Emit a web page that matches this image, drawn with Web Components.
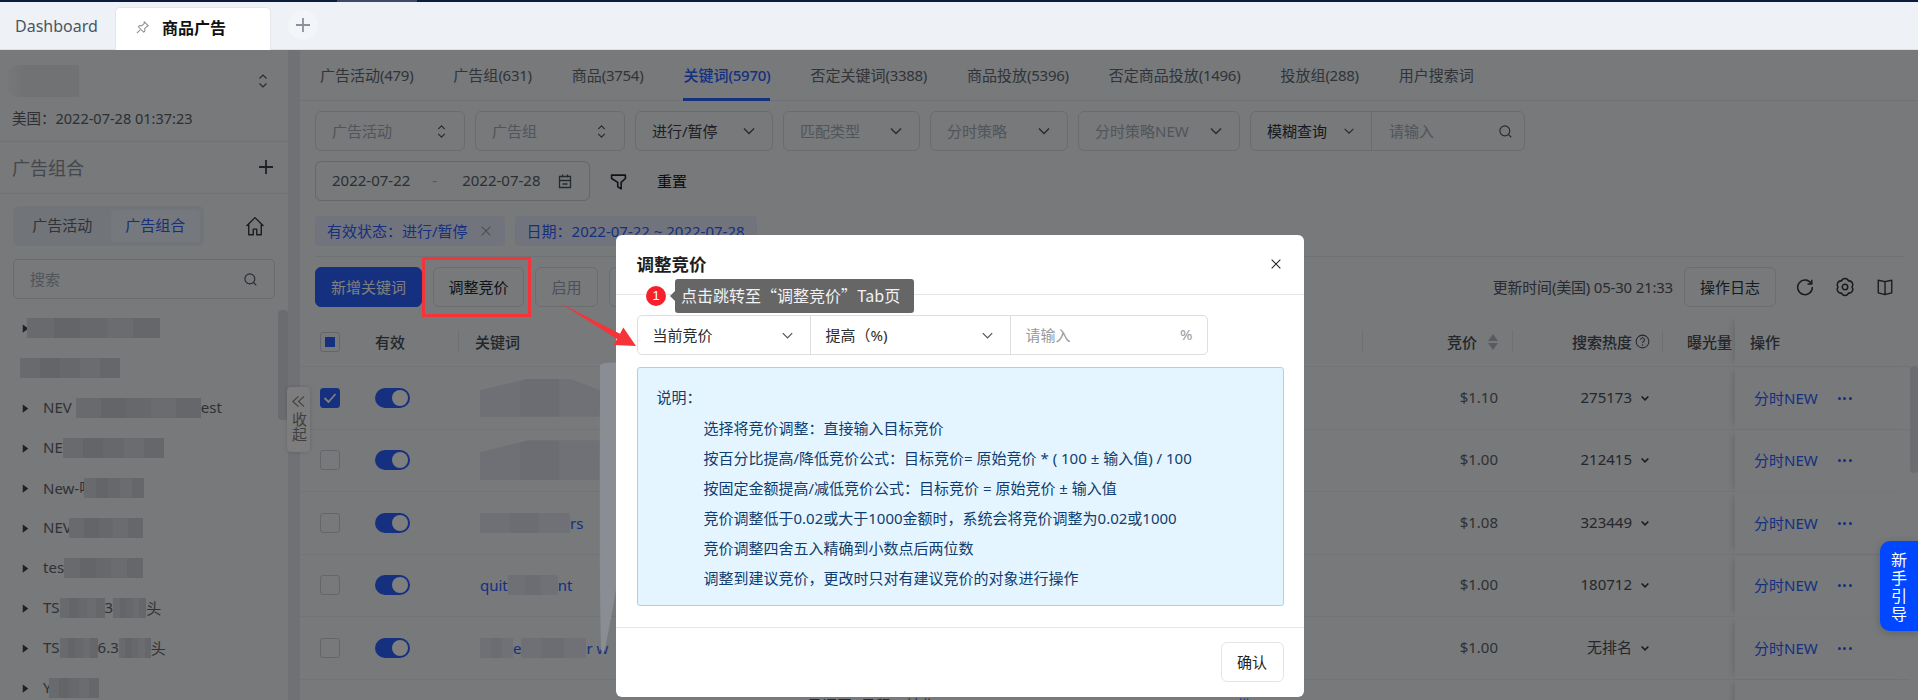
<!DOCTYPE html>
<html lang="zh-CN"><head><meta charset="utf-8"><title>商品广告</title>
<style>
html,body{margin:0;padding:0;height:700px;overflow:hidden;background:#eef2f6}
body{font:15px "Noto Sans","Noto Sans CJK SC",sans-serif;color:#60666f}
</style></head><body>
<x-app></x-app>
<script>
const ICONS={
 chev:'<path d="M3 5.5l5 5 5-5" fill="none" stroke="currentColor" stroke-width="1.3"/>',
 updown:'<path d="M4.5 5.5L8 2l3.5 3.5M4.5 10.5L8 14l3.5-3.5" fill="none" stroke="currentColor" stroke-width="1.2"/>',
 plus:'<path d="M8 1v14M1 8h14" fill="none" stroke="currentColor" stroke-width="1.8"/>',
 search:'<circle cx="7.3" cy="7.3" r="5.3" fill="none" stroke="currentColor" stroke-width="1.2"/><path d="M11.2 11.2l3 3" stroke="currentColor" stroke-width="1.2"/>',
 cal:'<path d="M2.5 3.5h11v11h-11zM2.5 7.5h11M5.5 1.5v3M10.5 1.5v3M5.5 11h5" fill="none" stroke="currentColor" stroke-width="1.3"/>',
 filter:'<path d="M1.500 2h13v3.200l-4 3.600V15L7.300 13V8.800L1.500 5.200z" fill="none" stroke="currentColor" stroke-width="1.500" stroke-linejoin="round"/>',
 home:'<path d="M1.200 8L8 1.300 14.800 8M3 6.800V15h3.600v-4.500h2.800V15H13V6.800" fill="none" stroke="currentColor" stroke-width="1.100" stroke-linejoin="round"/>',
 x:'<path d="M3 3l10 10M13 3L3 13" fill="none" stroke="currentColor" stroke-width="1.200"/>',
 pin:'<path d="M9.700 1.800l4.500 4.500-1.300.3-2.600 2.600.2 2.600-1.200 1.200-5.800-5.800 1.200-1.200 2.600.2 2.600-2.600zM5.500 10.500L2 14" fill="none" stroke="currentColor" stroke-width="1.100" stroke-linejoin="round"/>',
 refresh:'<path d="M13.600 5A6.500 6.500 0 1 0 14.500 8" fill="none" stroke="currentColor" stroke-width="1.300"/><path d="M14 1.500V5.300H10.300" fill="none" stroke="currentColor" stroke-width="1.300"/>',
 gear:'<path d="M13.600 8A3 3 0 0 1 10.800 12.850A3 3 0 0 1 5.200 12.850A3 3 0 0 1 2.400 8A3 3 0 0 1 5.200 3.150A3 3 0 0 1 10.800 3.150A3 3 0 0 1 13.600 8z" fill="none" stroke="currentColor" stroke-width="1.200" stroke-linejoin="round"/><circle cx="8" cy="8" r="2.200" fill="none" stroke="currentColor" stroke-width="1.200"/>',
 book:'<path d="M8 3.300L2 2v11.200l6 1.500 6-1.500V2zM8 3.300v11.400" fill="none" stroke="currentColor" stroke-width="1.200" stroke-linejoin="round"/>',
 help:'<circle cx="8" cy="8" r="6.800" fill="none" stroke="currentColor" stroke-width="1.100"/><path d="M5.900 6.200a2.100 2.100 0 1 1 3.200 1.800c-.7.4-1.100.8-1.100 1.700" fill="none" stroke="currentColor" stroke-width="1.100"/><circle cx="8" cy="11.700" r=".8" fill="currentColor"/>',
 caret:'<path d="M3.500 6l4.500 4.500L12.500 6" fill="none" stroke="currentColor" stroke-width="2"/>',
 tri:'<path d="M4 2l8 6-8 6z" fill="currentColor"/>',
 dbl:'<path d="M8 2.500L2 8l6 5.500M14 2.500L8 8l6 5.500" fill="none" stroke="currentColor" stroke-width="1.200"/>',
 check:'<path d="M2.500 8l4 4 7-8" fill="none" stroke="currentColor" stroke-width="1.800"/>'
};
function def(name,css,html){
 customElements.define(name,class extends HTMLElement{
  connectedCallback(){
   if(this.shadowRoot)return;
   const r=this.attachShadow({mode:'open'});
   const h=typeof html==='function'?html(this):html;
   r.innerHTML='<style>'+css+'</style>'+h;
  }
 });
}
const CJK='"Noto Sans CJK SC","Noto Sans",sans-serif';
def('x-i',':host{display:inline-flex;flex:none;line-height:0}svg{display:block}',
 e=>{const s=e.getAttribute('s')||16;return `<svg width="${s}" height="${s}" viewBox="0 0 16 16">${ICONS[e.getAttribute('n')]}</svg>`});

/* redaction mosaic (drawn under the dimming mask, so its colours are the undimmed ones) */
def('x-blur',':host{display:inline-block;flex:none;height:20px;background:linear-gradient(90deg,#d2d5db 0 20%,#c8cbd1 20% 40%,#ced1d8 40% 60%,#d4d8e1 60% 80%,#cccfd6 80%);vertical-align:middle}','');

def('x-toptabs',`
:host{display:block;height:50px;box-sizing:border-box;border-top:2px solid #0b1b3b;background:#eef1f5;border-bottom:1px solid #dcdfe4;position:relative}
.wrap{display:flex;align-items:flex-end;height:47px}
.dash{width:115px;box-sizing:border-box;padding-left:15px;height:42px;line-height:38px;font-size:16px;color:#4a5563}
.tab{width:156px;height:43px;box-sizing:border-box;background:#fff;border:1px solid #e3e6ea;border-bottom:0;border-radius:5px 5px 0 0;display:flex;align-items:center;padding:0 0 4px 19px;color:#111;font:600 16px ${CJK};gap:12px;margin-bottom:-1px}
.tab x-i{color:#8a8f96}
.plus{margin-left:17px;width:24px;height:24px;border-radius:50%;background:#f3f5f8;display:flex;align-items:center;justify-content:center;color:#8b929b;align-self:center;margin-top:-1px;padding:3px}
.hl{position:absolute;left:337px;width:80px;top:-2px;height:2px;background:#3d4a66}`,
`<div class="hl"></div><div class="wrap"><div class="dash">Dashboard</div><div class="tab"><x-i n="pin" s="15"></x-i>商品广告</div><div class="plus"><x-i n="plus" s="16"></x-i></div></div>`);

def('x-tree',`:host{display:flex;align-items:center;height:40px;padding-left:20px;color:#5f646c;font-size:15px;white-space:nowrap}
x-i{color:#3d4048;margin-right:12px}.t{display:flex;align-items:center;height:20px;padding-bottom:2px}
::slotted(x-blur){margin-top:2px}`,`<x-i n="tri" s="11"></x-i><span class="t"><slot></slot></span>`);

def('x-sidebar',`
:host{display:block;width:288px;flex:none;position:relative;height:650px;overflow:hidden;box-sizing:border-box}
.head{height:92px;box-sizing:border-box;border-bottom:1px solid #e2e5ea;padding:15px 12px 0}
.acct{display:flex;justify-content:space-between;align-items:center;height:32px;padding-right:5px}
.acct x-i{color:#555a62}
.time{margin-top:10px;line-height:22px;font-size:14.500px;color:#5a5f67;white-space:nowrap}
.sec{height:52px;box-sizing:border-box;border-bottom:1px solid #e2e5ea;display:flex;align-items:center;justify-content:space-between;padding:0 14px 2px 12px;font-size:18px;color:#8a8f98}
.sec x-i{color:#39414f}
.segrow{display:flex;align-items:center;margin:12px 0 0 13px;height:40px}
.seg{width:191px;height:40px;box-sizing:border-box;padding:4px;background:#e3e8f1;border-radius:6px;display:flex;align-items:center}
.seg span{width:91px;text-align:center;color:#60666f;line-height:30px;height:32px}
.seg .on{background:#eaf0fb;border-radius:4px;color:#2a60ff;margin-left:3px;width:90px}
.segrow x-i{margin-left:41px;color:#30343c}
.search{margin:13px 0 0 13px;width:262px;height:40px;box-sizing:border-box;border:1px solid #d0d5dd;border-radius:5px;display:flex;align-items:center;justify-content:space-between;padding:0 16px;color:#a5abb5}
.search span{padding-bottom:2px}
.search x-i{color:#505660}
.tree{margin-top:9px}
.thumb{position:absolute;left:278px;top:260px;width:10px;height:110px;background:#d4d8df;border-radius:4px}`,
`<div class="head"><div class="acct"><x-blur style="width:72px;height:32px;background:linear-gradient(90deg,#eef0f4,#e2e4e8 25%,#e2e4e8);margin-left:-5px;border-radius:12px 0 0 12px"></x-blur><x-i n="updown" s="16"></x-i></div><div class="time">美国：2022-07-28 01:37:23</div></div>
<div class="sec">广告组合<x-i n="plus" s="16"></x-i></div>
<div class="segrow"><div class="seg"><span>广告活动</span><span class="on">广告组合</span></div><x-i n="home" s="20"></x-i></div>
<div class="search"><span>搜索</span><x-i n="search" s="15"></x-i></div>
<div class="tree">
<x-tree><x-blur style="width:133px;margin-left:-16px"></x-blur></x-tree>
<x-tree><x-blur style="width:100px;margin-left:-23px"></x-blur></x-tree>
<x-tree>NEV<x-blur style="width:125px;margin-left:4px"></x-blur>est</x-tree>
<x-tree>NE<x-blur style="width:101px"></x-blur></x-tree>
<x-tree>New-咪<x-blur style="width:60px;margin-left:-10px"></x-blur></x-tree>
<x-tree>NEV<x-blur style="width:74px;margin-left:-3px"></x-blur></x-tree>
<x-tree>tes<x-blur style="width:79px"></x-blur></x-tree>
<x-tree>TS<x-blur style="width:45px"></x-blur>3<x-blur style="width:33px"></x-blur>头</x-tree>
<x-tree>TS<x-blur style="width:38px"></x-blur>6.3<x-blur style="width:32px"></x-blur>头</x-tree>
<x-tree>Y<x-blur style="width:50px;margin-left:-3px"></x-blur></x-tree>
</div><div class="thumb"></div>`);

def('x-mtabs',`:host{display:flex;gap:40px;height:51px;box-sizing:border-box;border-bottom:1px solid #dfe3e9;padding-left:20px;white-space:nowrap}
span{line-height:51px;height:50px;color:#636973;font-size:15px;box-sizing:border-box}
span i{font-style:normal;letter-spacing:-.28px}
.on{color:#2a60ff;font-weight:500;border-bottom:3px solid #2a60ff;height:51px}`,
`<span>广告活动<i>(479)</i></span><span>广告组<i>(631)</i></span><span>商品<i>(3754)</i></span><span class="on">关键词<i>(5970)</i></span><span>否定关键词<i>(3388)</i></span><span>商品投放<i>(5396)</i></span><span>否定商品投放<i>(1496)</i></span><span>投放组<i>(288)</i></span><span>用户搜索词</span>`);

def('x-sel',`:host{display:flex;align-items:center;justify-content:space-between;box-sizing:border-box;height:40px;flex:none;border:1px solid #d3d8e0;border-radius:6px;padding:0 15px 0 16px;color:#a4aab4;white-space:nowrap}
:host([dark]){color:#3a3f48}x-i{color:#4d525b}.t{padding-bottom:2px}`,
e=>`<span class="t"><slot></slot></span><x-i n="${e.getAttribute('i')||'chev'}" s="${e.getAttribute('i')?15:16}"></x-i>`);

def('x-filters',`
:host{display:block;padding:10px 0 0 15px}
.r{display:flex;gap:10px;height:40px;margin-bottom:10px;align-items:center}
.fuzzy{display:flex;width:275px;height:40px;box-sizing:border-box;border:1px solid #d3d8e0;border-radius:6px;flex:none}
.fz1{width:121px;box-sizing:border-box;border-right:1px solid #d3d8e0;display:flex;align-items:center;justify-content:space-between;padding:0 15px 0 16px;color:#2d323a}
.fz2{flex:1;display:flex;align-items:center;justify-content:space-between;padding:0 11px 0 17px;color:#a4aab4}
.fz2 x-i,.fz1 x-i{color:#4d525b}
.fz1 span,.fz2 span{padding-bottom:2px}
.date{width:275px;height:40px;box-sizing:border-box;border:1px solid #c9ced6;border-radius:6px;display:flex;align-items:center;padding:0 16px;color:#5a5f68;flex:none}
.date span{padding-bottom:2px}
.date b{font-weight:400;color:#a4aab4;margin:0 25px 0 22px;padding-bottom:2px}
.date x-i{margin-left:auto;color:#4d525b}
.ff{margin-left:10px;color:#1f2530;margin-right:11px;display:flex}
.rs{color:#16191f;margin-left:9px;padding-bottom:2px}`,
`<div class="r">
<x-sel i="updown" style="width:150px">广告活动</x-sel><x-sel i="updown" style="width:150px">广告组</x-sel>
<x-sel dark style="width:138px">进行/暂停</x-sel><x-sel style="width:137px">匹配类型</x-sel><x-sel style="width:138px">分时策略</x-sel><x-sel style="width:162px">分时策略NEW</x-sel>
<div class="fuzzy"><div class="fz1"><span>模糊查询</span><x-i n="chev" s="14"></x-i></div><div class="fz2"><span>请输入</span><x-i n="search" s="15"></x-i></div></div></div>
<div class="r"><div class="date"><span>2022-07-22</span><b>-</b><span>2022-07-28</span><x-i n="cal" s="16"></x-i></div><span class="ff"><x-i n="filter" s="17"></x-i></span><span class="rs">重置</span></div>`);

def('x-tag',`:host{display:inline-flex;align-items:center;height:30px;padding:0 12px;background:#e2e9f8;border-radius:4px;color:#2a60ff;white-space:nowrap;flex:none}
x-i{color:#939aa5;margin-left:11px}.t{padding-bottom:2px}`,e=>`<span class="t"><slot></slot></span>`+(e.hasAttribute('x')?'<x-i n="x" s="14"></x-i>':''));

def('x-btn',`:host{display:inline-flex;align-items:center;justify-content:center;height:40px;box-sizing:border-box;border:1px solid #d6dae1;border-radius:6px;padding:0 15px 2px;color:#2f343c;white-space:nowrap;flex:none}
:host([primary]){background:#2a60ff;border-color:#2a60ff;color:#fff}
:host([dis]){color:#9da3ad}`,`<slot></slot>`);

def('x-actions',`
:host{display:block}
.tags{display:flex;gap:10px;padding:5px 13px 10px 15px}
.line{height:1px;background:#e2e5ea;margin:0 13px 0 15px}
.row{display:flex;align-items:center;height:40px;margin-top:10px;padding:0 24px 0 15px;gap:11px}
.sp{margin-left:auto;color:#52575f;white-space:nowrap;padding-bottom:2px;letter-spacing:-.2px}
.ic{color:#30343c;margin-left:10px}
.ic.first{margin-left:9px}`,
`<div class="tags"><x-tag x>有效状态：进行/暂停</x-tag><x-tag>日期：2022-07-22 ~ 2022-07-28</x-tag></div><div class="line"></div>
<div class="row"><x-btn primary>新增关键词</x-btn><x-btn style="width:91px;color:#22262d">调整竞价</x-btn><x-btn dis style="width:63px">启用</x-btn><x-btn dis style="width:63px">暂停</x-btn>
<span class="sp">更新时间(美国) 05-30 21:33</span><x-btn style="width:92px">操作日志</x-btn>
<x-i class="ic first" n="refresh" s="18"></x-i><x-i class="ic" n="gear" s="20"></x-i><x-i class="ic" n="book" s="18"></x-i></div>`);

const GRID='grid-template-columns:60px 99px 904px 150px 150px 72px 175px';
def('x-check',`:host{display:block;width:20px;height:20px;box-sizing:border-box;border:1px solid #c7ccd4;border-radius:3px;color:#fff}
:host([on]){background:#2a60ff;border-color:#2a60ff;display:flex;align-items:center;justify-content:center}
:host([half]){display:flex;align-items:center;justify-content:center;background:#eef2f6}
i{display:block;width:10px;height:10px;background:#2a60ff}`,
e=>e.hasAttribute('on')?'<x-i n="check" s="16"></x-i>':e.hasAttribute('half')?'<i></i>':'');
def('x-sw',`:host{display:block;width:35px;height:20px;border-radius:10px;background:#2a60ff;position:relative}
i{position:absolute;right:2px;top:2px;width:16px;height:16px;border-radius:50%;background:#fff}`,'<i></i>');

def('x-row',`:host{display:grid;${GRID};height:62.500px;box-sizing:border-box;border-bottom:1px solid #e4e7ec;align-items:center;white-space:nowrap;color:#5d626b}
.c1{padding-left:20px}.c2{padding-left:15px}.c3{padding-left:21px;color:#2a60ff;display:flex;align-items:center;height:100%;overflow:hidden}
.c4{text-align:right;padding:0 15px 2px 0}
.c5{display:flex;justify-content:flex-end;align-items:center;padding-right:12px;gap:7px;color:#4a4f57}
.c5 span{padding-bottom:2px}
.c5 x-i{color:#30343c}
.c7{height:100%;display:flex;align-items:center;padding-left:19px;gap:20px;color:#2a60ff;background:#eef2f6;box-shadow:-6px 0 6px -4px rgba(0,0,0,.12);margin-bottom:-1px}
.c7>span:first-child{padding-bottom:2px}
.dots{display:flex;gap:2.500px}
.dots i{width:3px;height:3px;background:#2a60ff;border-radius:50%;display:block}`,
e=>`<div class="c1"><x-check ${e.hasAttribute('on')?'on':''}></x-check></div><div class="c2"><x-sw></x-sw></div><div class="c3"><slot></slot></div><div class="c4">${e.getAttribute('bid')}</div><div class="c5"><span>${e.getAttribute('heat')}</span><x-i n="caret" s="12"></x-i></div><div></div><div class="c7"><span>分时NEW</span><span class="dots"><i></i><i></i><i></i></span></div>`);

const KW='background:linear-gradient(90deg,#dce0ec 0 33%,#d6dae7 33% 66%,#dee2ee 66%)';
def('x-table',`
:host{display:flex;height:383px;margin-top:10px;overflow:hidden}
.t{width:1610px;flex:none}
.h{display:grid;${GRID};height:50px;box-sizing:border-box;border-bottom:1px solid #e4e7ec;align-items:center;font:500 15px ${CJK};color:#474c55;white-space:nowrap}
.h>div{height:100%;display:flex;align-items:center;box-sizing:border-box;position:relative}
.d::after{content:"";position:absolute;right:0;top:13px;height:23px;width:1px;background:#dde1e7}
.sort{display:flex;flex-direction:column;gap:2px;margin-left:11px}
.sort i{width:0;height:0;border:5px solid transparent;display:block;border-width:0 5.500px 7px}
.sort i:first-child{border-bottom-color:#b2b7c0}
.sort i:last-child{border-width:7px 5.500px 0;border-top-color:#b2b7c0}
.op{background:#eef2f6;box-shadow:-6px 0 6px -4px rgba(0,0,0,.12);padding-left:15px}
.sb{flex:none;width:8px;padding-top:49px}.sb i{display:block;height:107px;background:#d7dbe2;border-radius:4px}`,
`<div class="t"><div class="h">
<div style="padding-left:20px"><x-check half></x-check></div><div class="d" style="padding-left:15px">有效</div><div class="d" style="padding-left:16px">关键词</div>
<div class="d" style="justify-content:flex-end;padding-right:15px">竞价<span class="sort"><i></i><i></i></span></div>
<div class="d" style="justify-content:flex-end;padding-right:13px;gap:3px">搜索热度<x-i n="help" s="15"></x-i></div>
<div style="padding-left:24px;overflow:hidden">曝光量</div><div class="op">操作</div></div>
<x-row on bid="$1.10" heat="275173"><x-blur style="width:120px;height:38px;${KW};clip-path:polygon(0 30%,40% 0,75% 0,100% 30%,100% 100%,0 100%)"></x-blur></x-row>
<x-row bid="$1.00" heat="212415"><x-blur style="width:120px;height:40px;${KW};clip-path:polygon(0 30%,40% 0,100% 0,100% 100%,0 100%)"></x-blur></x-row>
<x-row bid="$1.08" heat="323449"><x-blur style="width:90px;${KW}"></x-blur>rs</x-row>
<x-row bid="$1.00" heat="180712">quit<x-blur style="width:50px;${KW}"></x-blur>nt</x-row>
<x-row bid="$1.00" heat="无排名"><x-blur style="width:33px;${KW}"></x-blur>e<x-blur style="width:65px;${KW}"></x-blur>r w</x-row>
<x-row bid="" heat=""></x-row>
</div><div class="sb"><i></i></div>`);

def('x-main',`:host{display:block;flex:1;min-width:0;height:650px;overflow:hidden;position:relative}
.p6{position:absolute;top:644px;white-space:nowrap}`,
`<x-mtabs></x-mtabs><x-filters></x-filters><x-actions></x-actions><x-table></x-table>
<span class="p6" style="left:502px;color:#4a4f57">[日语田] 日程二转化</span><span class="p6" style="left:880px;color:#2a60ff">$7.89 /0份</span>`);

def('x-modal',`
:host{display:block;width:688px;height:462px;background:#fff;border-radius:6px;color:#333;position:relative;font-size:15px;overflow:hidden}
.hd{height:60px;box-sizing:border-box;border-bottom:1px solid #e6e6e6;display:flex;align-items:center;justify-content:space-between;padding:0 21px 2px 21px}
.hd b{font:700 17.500px ${CJK};color:#1d1d1f}
.hd x-i{color:#222}
.bd{padding:20px 20px 0 21px}
.grp{display:flex;width:571px;height:40px;box-sizing:border-box;border:1px solid #dedede;border-radius:5px;color:#2b2b2b;white-space:nowrap}
.grp>div{display:flex;align-items:center;justify-content:space-between;box-sizing:border-box;padding:0 15px;border-right:1px solid #dedede}
.grp>div:last-child{border:0;flex:1;color:#9a9a9a;padding-right:14px}
.grp span{padding-bottom:2px}
.grp x-i{color:#555}
.info{margin-top:12px;height:239px;box-sizing:border-box;background:#e4f5ff;border:1px solid #9dd5f9;border-radius:3px;padding:14px 19px;color:#0f3d70}
.info div{line-height:30px;padding-left:47px;white-space:nowrap}
.info .t{padding-left:0;margin-bottom:1px}
.ft{margin-top:21px;border-top:1px solid #e6e6e6;padding:14px 20px 0;display:flex;justify-content:flex-end}`,
`<div class="hd"><b>调整竞价</b><x-i n="x" s="14"></x-i></div><div class="bd">
<div class="grp"><div style="width:173px"><span>当前竞价</span><x-i n="chev" s="15"></x-i></div><div style="width:200px"><span>提高（%)</span><x-i n="chev" s="15"></x-i></div><div><span>请输入</span><span>%</span></div></div>
<div class="info"><div class="t">说明：</div><div>选择将竞价调整：直接输入目标竞价</div><div>按百分比提高/降低竞价公式：目标竞价= 原始竞价 * ( 100 ± 输入值) / 100</div><div>按固定金额提高/减低竞价公式：目标竞价 = 原始竞价 ± 输入值</div><div>竞价调整低于0.02或大于1000金额时，系统会将竞价调整为0.02或1000</div><div>竞价调整四舍五入精确到小数点后两位数</div><div>调整到建议竞价，更改时只对有建议竞价的对象进行操作</div></div></div>
<div class="ft"><x-btn style="width:63px;color:#222;border-color:#e4e4e4">确认</x-btn></div>`);

def('x-mask',`:host{position:absolute;left:0;right:0;top:50px;bottom:0;background:rgba(0,0,0,.5);display:flex;justify-content:center;padding-top:185px;box-sizing:border-box;overflow:hidden}
x-modal{margin-right:-1px}svg{position:absolute;left:590px;top:300px}`,
`<svg width="40" height="320" viewBox="0 0 40 320"><path d="M10 15C14 12 22 12 40 13V90C37 170 28 240 14 303L11 300C9 210 10 100 10 15z" fill="#8a8d93"/></svg><x-modal></x-modal>`);

def('x-guide',`:host{position:absolute;left:1880px;top:541px;width:38px;height:90px;box-sizing:border-box;background:#0047ff;color:#fff;border-radius:10px 0 0 10px;font:16px/18px ${CJK};padding-top:9px;text-align:center;box-shadow:0 2px 8px rgba(0,0,0,.2)}`,
`新<br>手<br>引<br>导`);

def('x-callout',`:host{position:absolute;left:646px;top:279px;display:flex;align-items:center;font-family:${CJK}}
.n{width:20px;height:20px;border-radius:50%;background:#f5222d;color:#fff;font:400 13px/20px "Liberation Sans",sans-serif;text-align:center;margin-right:9px}
.t{position:relative;background:#666;color:#f2f2f2;border-radius:3px;height:34px;width:239px;box-sizing:border-box;line-height:33px;padding-left:6px;font-size:16px;white-space:nowrap}
.t::before{content:"";position:absolute;left:-5px;top:12px;border:5px solid transparent;border-left:0;border-right-color:#666}`,
`<span class="n">1</span><div class="t">点击跳转至“调整竞价”Tab页</div>`);

def('x-app',`:host{display:block;width:1918px;height:700px;position:relative;overflow:hidden;background:#eef2f6}
.body{display:flex;height:650px;position:relative}
.strip{width:12px;flex:none;background:#dfe2ea}
.fold{position:absolute;left:287px;top:337px;width:23px;height:65px;background:#fafafa;border-radius:4px;box-shadow:0 0 4px rgba(0,0,0,.15);display:flex;flex-direction:column;align-items:center;color:#7e8186;font-size:15px;padding-top:7px;box-sizing:border-box}
.fold x-i{margin-bottom:3px}
.fold span{writing-mode:vertical-rl;line-height:23px;letter-spacing:0}
.red{position:absolute;left:422px;top:257px;width:109px;height:60px;box-sizing:border-box;border:3px solid #f5343a}
.arrow{position:absolute;left:0;top:0;pointer-events:none}`,
`<x-toptabs></x-toptabs><div class="body"><x-sidebar></x-sidebar><div class="strip"></div><x-main></x-main><div class="fold"><x-i n="dbl" s="15"></x-i><span>收起</span></div></div>
<x-mask></x-mask>
<div class="red"></div>
<svg class="arrow" width="700" height="400"><polygon points="560,303 620,333.700 623.300,327.500 636,346 613.700,345 617,339" fill="#f5343a"/></svg>
<x-callout></x-callout><x-guide></x-guide>`);
</script>
</body></html>
